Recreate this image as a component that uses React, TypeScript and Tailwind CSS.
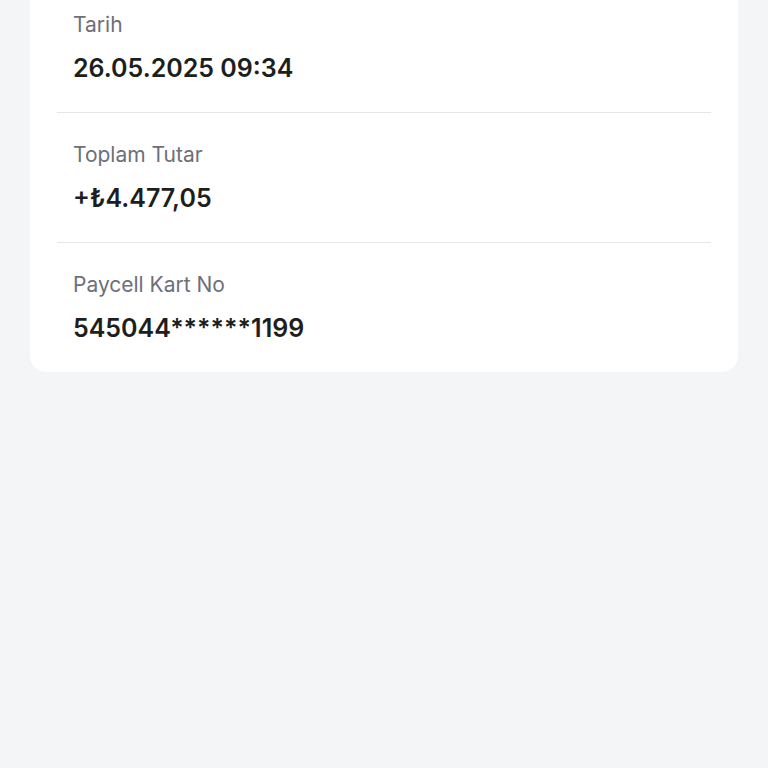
const rows = [
  { label: "Tarih", value: "26.05.2025 09:34" },
  { label: "Toplam Tutar", value: "+₺4.477,05" },
  { label: "Paycell Kart No", value: "545044******1199" },
];

export default function App() {
  return (
    <div className="h-[768px] overflow-hidden bg-[#f4f5f7] font-['Inter',sans-serif]">
      <div className="mx-[30px] -mt-[17px] rounded-[16px] bg-white px-[27px]">
        {rows.map((r, i) => (
          <div
            key={r.label}
            className={
              i < rows.length - 1
                ? "border-b border-[#e6e7ea] px-[16px] pt-[30px] pb-[28px]"
                : "px-[16px] pt-[30px] pb-[28px]"
            }
          >
            <div className="text-[21px] leading-[24px] text-[#6c7079]">{r.label}</div>
            <div className="mt-[15px] text-[25px] font-semibold leading-[32px] text-[#1d1e20]">{r.value}</div>
          </div>
        ))}
      </div>
    </div>
  );
}
